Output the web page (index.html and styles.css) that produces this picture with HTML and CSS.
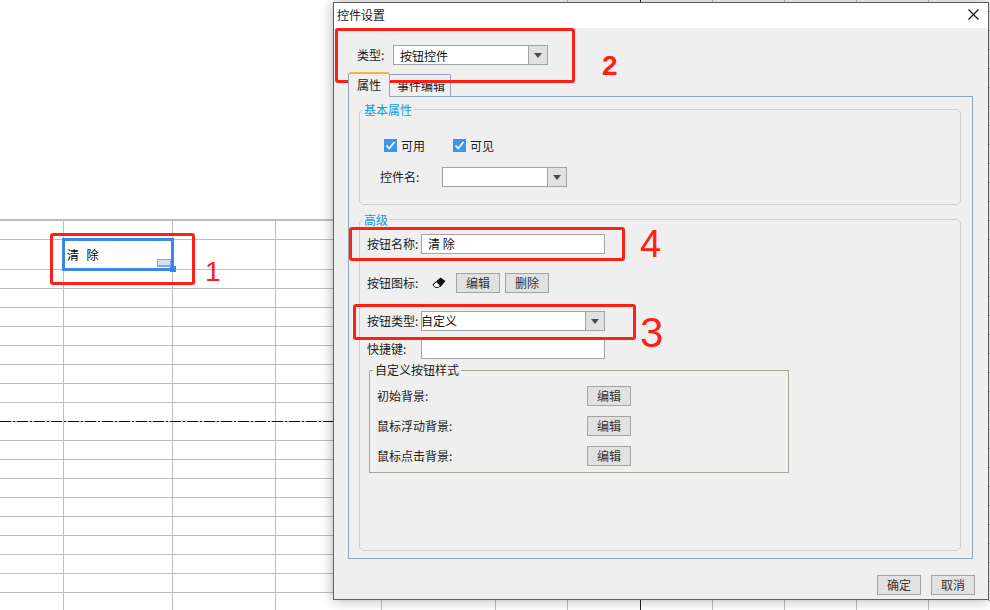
FILE: index.html
```html
<!DOCTYPE html>
<html lang="zh">
<head>
  <meta charset="UTF-8" />
  <title>控件设置</title>
  <link rel="stylesheet" href="styles.css">
</head>
<body>
  <div class="sheet">
    <div class="sheet-blank"></div>

    <!-- 单元格里的按钮控件 -->
    <div class="cell-button">
      <span class="cell-text">清  除</span>
      <span class="cell-widget"></span>
      <span class="cell-handle"></span>
    </div>

    <div class="dialog">
      <div class="titlebar">
        <span>控件设置</span>
        <svg class="close" width="11" height="11" viewBox="0 0 11 11"><path d="M0.5 0.5L10.5 10.5M10.5 0.5L0.5 10.5" stroke="#111" stroke-width="1.1" fill="none"/></svg>
      </div>

      <div class="dialog-body">
        <div class="type-row">
          <span class="type-label">类型:</span>
          <div class="select select-type"><span class="select-value">按钮控件</span><span class="select-arrow"></span></div>
        </div>

        <div class="tabs">
          <div class="tab tab-active">属性</div>
          <div class="tab">事件编辑</div>
        </div>

        <div class="pane">
          <fieldset class="group group-basic">
            <legend>基本属性</legend>
            <div class="check-row">
              <label class="check">
                <svg width="13" height="13" viewBox="0 0 13 13"><rect width="13" height="13" fill="#3b97e9"/><path d="M2.5 6.5L5.2 9.5L10.5 3" stroke="#fff" stroke-width="1.7" fill="none"/></svg>
                可用
              </label>
              <label class="check">
                <svg width="13" height="13" viewBox="0 0 13 13"><rect width="13" height="13" fill="#3b97e9"/><path d="M2.5 6.5L5.2 9.5L10.5 3" stroke="#fff" stroke-width="1.7" fill="none"/></svg>
                可见
              </label>
            </div>
            <div class="name-row">
              <span class="name-label">控件名:</span>
              <div class="select select-name"><span class="select-value"></span><span class="select-arrow"></span></div>
            </div>
          </fieldset>

          <fieldset class="group group-advanced">
            <legend>高级</legend>
            <div class="form-row">
              <span class="form-label">按钮名称:</span>
              <div class="text-input input-name">清 除</div>
            </div>
            <div class="form-row row-icon">
              <span class="form-label">按钮图标:</span>
              <svg class="eraser" width="14" height="12" viewBox="0 0 14 12"><path d="M8.5 0.5L13.5 4L8.5 10H3L0.5 7.5Z" fill="#111"/><path d="M4.2 4.8L8.2 8.2L6.8 10.4H3L1 7.8Z" fill="#fff" stroke="#111" stroke-width="0.9"/></svg>
              <button class="btn">编辑</button>
              <button class="btn btn-delete">删除</button>
            </div>
            <div class="form-row row-type">
              <span class="form-label">按钮类型:</span>
              <div class="select select-wide"><span class="select-value value-tight">自定义</span><span class="select-arrow"></span></div>
            </div>
            <div class="form-row row-key">
              <span class="form-label">快捷键:</span>
              <div class="text-input"></div>
            </div>

            <fieldset class="custom">
              <legend>自定义按钮样式</legend>
              <div class="custom-row"><span class="custom-label">初始背景:</span><button class="btn">编辑</button></div>
              <div class="custom-row"><span class="custom-label">鼠标浮动背景:</span><button class="btn">编辑</button></div>
              <div class="custom-row"><span class="custom-label">鼠标点击背景:</span><button class="btn">编辑</button></div>
            </fieldset>
          </fieldset>
        </div>

        <div class="footer">
          <button class="btn">确定</button>
          <button class="btn">取消</button>
        </div>
      </div>
    </div>

    <!-- 红色标注 -->
    <div class="mark mark-1"></div>
    <div class="mark mark-2"></div>
    <div class="mark mark-3"></div>
    <div class="mark mark-4"></div>
    <span class="digit digit-1">1</span>
    <span class="digit digit-2">2</span>
    <span class="digit digit-3">3</span>
    <span class="digit digit-4">4</span>
  </div>
</body>
</html>
```

FILE: styles.css
```css
* {box-sizing: border-box;}
body {margin: 0; overflow: hidden; font-family: "Noto Sans CJK SC", "Liberation Sans", sans-serif; font-size: 12px; line-height: 16px; color: #1c1c1c;}

/* Sheet: lines are background layers, first layer on top */
.sheet {
  position: relative; width: 990px; height: 610px; overflow: hidden; background-color: #fff;
  background-image:
    repeating-linear-gradient(to right, #111 0 11px, transparent 11px 13px, #111 13px 15px, transparent 15px 17px),
    linear-gradient(#bdbdbd, #bdbdbd), linear-gradient(#bdbdbd, #bdbdbd),
    repeating-linear-gradient(to bottom, #bdbdbd 0 1px, transparent 1px 19px),
    linear-gradient(#bdbdbd, #bdbdbd), linear-gradient(#bdbdbd, #bdbdbd), linear-gradient(#bdbdbd, #bdbdbd),
    linear-gradient(#bdbdbd, #bdbdbd), linear-gradient(#bdbdbd, #bdbdbd), linear-gradient(#bdbdbd, #bdbdbd),
    linear-gradient(#222, #222),
    linear-gradient(#bdbdbd, #bdbdbd), linear-gradient(#bdbdbd, #bdbdbd), linear-gradient(#bdbdbd, #bdbdbd),
    linear-gradient(#bdbdbd, #bdbdbd),
    repeating-linear-gradient(to bottom, #bdbdbd 0 1px, transparent 1px 19px);
  background-repeat: no-repeat;
  background-size:
    333px 1px,
    980px 2px, 980px 1px,
    980px 342px,
    1px 100%, 1px 100%, 1px 100%, 1px 100%, 1px 100%, 1px 100%, 1px 100%, 1px 100%, 1px 100%, 1px 100%, 1px 100%,
    2px 100%;
  background-position:
    0 421px,
    0 219px, 0 239px,
    0 269px,
    63px 0, 172px 0, 275px 0, 381px 0, 495px 0, 567px 0, 640px 0, 712px 0, 784px 0, 856px 0, 928px 0,
    988px 11px;
}
.sheet-blank {width: 560px; height: 219px; background: #fff;}

.cell-button {position: absolute; left: 62px; top: 238px; width: 112px; height: 33px; border: 3px solid #3a87ea; background: #fff;}
.cell-text {position: absolute; left: 2px; top: 6px; white-space: pre; word-spacing: 1px; color: #000;}
.cell-widget {position: absolute; right: 0; bottom: 1px; width: 14px; height: 8px; background: #cfdff4; border: 1px solid #8fa6cc; border-bottom-width: 2px;}
.cell-handle {position: absolute; right: -5px; bottom: -4px; width: 6px; height: 6px; background: #3a87ea;}

/* Dialog */
.dialog {position: absolute; left: 333px; top: 2px; width: 656px; height: 598px; border: 1px solid #5f5f5f; background: #efefef; box-shadow: 0 0 12px rgba(0, 0, 0, 0.32);}
.titlebar {display: flex; justify-content: space-between; align-items: center; height: 25px; padding: 0 9px 2px 3px; background: #fff;}
.dialog-body {display: flex; flex-direction: column; padding: 0 14px;}

.type-row {display: flex; align-items: center; padding: 17px 0 0 9px;}
.type-label {width: 36px;}
.select {display: flex; height: 20px; border: 1px solid #a3a3a3; background: #fff;}
.select-value {flex: 1; padding-left: 6px; line-height: 20px; color: #111;}
.value-tight {margin-left: -1px; padding-left: 0; line-height: 18px;}
.select-arrow {display: flex; align-items: center; justify-content: center; width: 19px; background: #e1e1e1; border-left: 1px solid #a3a3a3;}
.select-arrow::after {content: ""; border: 4px solid transparent; border-top: 5px solid #4a4a4a; border-bottom: 0;}
.select-type {width: 155px;}
.select-name {width: 125px;}
.select-wide {width: 184px;}

.tabs {display: flex; align-items: flex-end; height: 24px; margin-top: 7px;}
.tab {height: 22px; padding: 0 0 0 7px; width: 61px; line-height: 22px; border: 1px solid #93a4bc; border-bottom: 0; border-left: 0; border-radius: 0 2px 0 0;}
.tab-active {position: relative; z-index: 1; width: 42px; height: 25px; margin-bottom: -1px; padding: 0 0 0 8px; line-height: 21px; border-left: 1px solid #93a4bc; border-top: 2px solid #f0b73c; border-right: 1px solid #93a4bc; border-radius: 3px 3px 0 0; background: #efefef;}

.pane {height: 463px; margin-right: 1px; border: 1px solid #93a4bc; padding: 3px 11px 0 10px;}

.group {margin: 0; padding: 0 0 0 7px; min-width: 0; border: 1px solid #cdcdcd; border-radius: 5px;}
.group legend {margin-left: -5px; padding: 2px 2px 0; line-height: 16px; color: #0f9bd7;}
.group-basic {height: 105px; padding-top: 21px;}
.group-advanced {height: 341px; margin-top: 5px; padding-top: 6px;}

.check-row {display: flex; padding-left: 17px; height: 13px;}
.check {display: flex; align-items: center; gap: 4px; width: 69px;}
.name-row {display: flex; align-items: center; margin-top: 15px; padding-left: 13px;}
.name-label {width: 62px;}

.form-row {display: flex; align-items: center; height: 20px;}
.form-label {width: 54px; white-space: nowrap;}
.text-input {width: 184px; height: 20px; padding-left: 6px; line-height: 18px; border: 1px solid #a3a3a3; background: #fff; color: #111;}
.row-icon {margin-top: 19px;}
.row-type {margin-top: 18px;}
.row-key {margin-top: 8px;}
.eraser {margin: 0 10px 0 11px;}

.btn {width: 44px; height: 20px; padding: 0; font: inherit; line-height: 18px; color: #333; background: #e1e1e1; border: 1px solid #a3a3a3;}
.btn-delete {margin-left: 5px;}

.custom {width: 420px; height: 111px; margin: 3px 0 0 2px; padding: 8px 0 0 7px; min-width: 0; border: 1px solid #a5a598;}
.custom legend {margin-left: -4px; padding: 0 2px; line-height: 16px; color: #1c1c1c;}
.custom-row {display: flex; align-items: center; height: 20px; margin-bottom: 10px;}
.custom-label {width: 210px;}

.footer {display: flex; justify-content: flex-end; gap: 10px; margin-top: 16px; margin-right: -1px;}

/* Red annotations */
.mark {position: absolute; border: 3px solid #ff2015; border-radius: 3px;}
.mark-1 {left: 50px; top: 233px; width: 145px; height: 52px;}
.mark-2 {left: 335px; top: 28px; width: 240px; height: 55px;}
.mark-3 {left: 353px; top: 304px; width: 283px; height: 36px;}
.mark-4 {left: 349px; top: 227px; width: 276px; height: 34px;}
.digit {position: absolute; color: #ff2015; font-family: "Liberation Sans", sans-serif; line-height: 1;}
.digit-1 {left: 205px; top: 258px; font-size: 28px;}
.digit-2 {left: 602px; top: 52px; font-size: 28px; font-weight: bold;}
.digit-3 {left: 640px; top: 312px; font-size: 42px;}
.digit-4 {left: 640px; top: 225px; font-size: 38px;}
```
